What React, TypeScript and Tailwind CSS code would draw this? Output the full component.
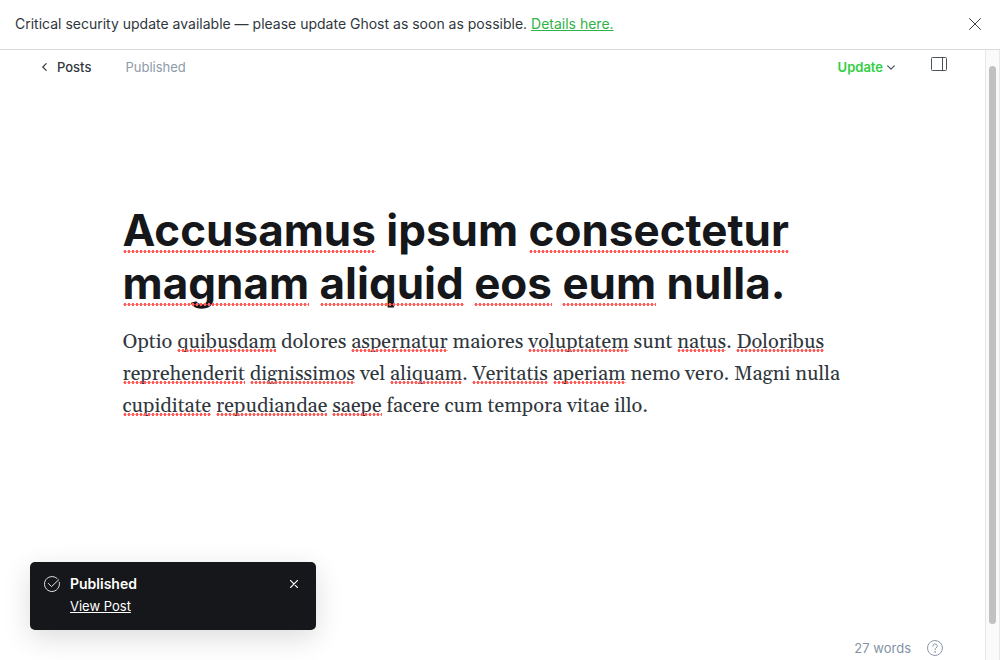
import React from "react";

function Misspelled({ children }: { children: string }) {
  return (
    <span className="relative whitespace-nowrap after:absolute after:inset-x-0 after:bottom-(--dots) after:h-[3px] after:bg-[radial-gradient(circle,#ff5b58_1.3px,transparent_1.8px)] after:bg-[length:4px_3px] after:content-['']">
      {children}
    </span>
  );
}

/* Words between underscores carry the spell checker's dotted underline. */
function Marked({ text }: { text: string }) {
  return (
    <>
      {text
        .split("_")
        .map((part, i) => (i % 2 ? <Misspelled key={i}>{part}</Misspelled> : <React.Fragment key={i}>{part}</React.Fragment>))}
    </>
  );
}

const title = "_Accusamus_ ipsum _consectetur_ _magnam_ _aliquid_ _eos_ _eum_ nulla.";
const body =
  "Optio _quibusdam_ dolores _aspernatur_ maiores _voluptatem_ sunt _natus_. _Doloribus_ _reprehenderit_ _dignissimos_ vel _aliquam_. _Veritatis_ _aperiam_ nemo vero. Magni nulla _cupiditate_ _repudiandae_ _saepe_ facere cum tempora vitae illo.";

function Alert() {
  return (
    <aside className="flex items-center justify-between border-b border-[#dadbdc] px-[15px] pb-[13px] pt-3 text-sm leading-6 text-[#30373d]">
      <p>
        Critical security update available — please update Ghost as soon as possible.{" "}
        <a href="#details" className="text-[#30b24a] underline">
          Details here.
        </a>
      </p>
      <button type="button" aria-label="Dismiss" className="p-1">
        <svg className="size-3" viewBox="0 0 12 12" fill="none" stroke="#394047" strokeLinecap="round">
          <path d="M.5.5l11 11M11.5.5l-11 11" />
        </svg>
      </button>
    </aside>
  );
}

function Toolbar() {
  return (
    <header className="flex items-center pl-10 pr-[38px] pt-[7px] text-[13px] leading-5">
      <a href="#posts" className="flex items-center gap-2 font-medium text-[#30373d]">
        <svg className="h-2 w-[9px]" viewBox="0 0 9 8" fill="none" stroke="#394047" strokeWidth="1.2" strokeLinecap="round" strokeLinejoin="round">
          <path d="M6.2.6L2.8 4l3.4 3.4" />
        </svg>
        Posts
      </a>
      <span className="ml-[34px] text-[#8d9aab]">Published</span>
      <button type="button" className="ml-auto flex items-center gap-1 font-semibold text-[#30cf43]">
        Update
        <svg className="h-[5px] w-2" viewBox="0 0 8 5" fill="none" stroke="#50575e" strokeWidth="1.3" strokeLinecap="round" strokeLinejoin="round">
          <path d="M.7.9L4 4.1 7.3.9" />
        </svg>
      </button>
      <button type="button" aria-label="Settings" className="ml-9 self-start">
        <svg className="h-[14px] w-4" viewBox="0 0 16 14" fill="none" stroke="#4b535c">
          <rect x=".5" y=".5" width="15" height="13" rx="1" />
          <path d="M11.5.5v13" />
        </svg>
      </button>
    </header>
  );
}

function Toast() {
  return (
    <div role="status" className="absolute bottom-[30px] left-[30px] flex w-[286px] items-start rounded-[5px] bg-[#15171a] px-[14px] py-3 text-white shadow-[0_8px_28px_rgba(0,0,0,0.14)]">
      <svg className="mt-0.5 size-4" viewBox="0 0 16 16" fill="none" stroke="#e3e5e7" strokeLinecap="round" strokeLinejoin="round">
        <path d="M15.3 6.3A7.5 7.5 0 1 1 13 2.4" />
        <path d="M4.3 7.4l3.2 3.2L14.8 3.7" />
      </svg>
      <div className="ml-[10px] flex-1">
        <p className="text-sm font-semibold leading-5">Published</p>
        <a href="#post" className="block text-[13px] leading-6 underline">
          View Post
        </a>
      </div>
      <button type="button" aria-label="Close" className="p-1.5 pr-1">
        <svg className="size-2" viewBox="0 0 8 8" fill="none" stroke="#fff" strokeWidth="1.2" strokeLinecap="round">
          <path d="M.4.4l7.2 7.2M7.6.4L.4 7.6" />
        </svg>
      </button>
    </div>
  );
}

export default function App() {
  return (
    <div className="relative flex min-h-screen flex-col bg-white font-[Inter,sans-serif]">
      <Alert />
      <div className="flex flex-1">
        <div className="flex min-w-0 flex-1 flex-col">
          <Toolbar />
          <main className="mx-auto w-full max-w-[740px] flex-1 pt-[127px]">
            <h1 contentEditable suppressContentEditableWarning spellCheck={false} className="text-[44px] font-bold leading-[53px] text-[#15171a] outline-none [--dots:4px]">
              <Marked text={title} />
            </h1>
            <p contentEditable suppressContentEditableWarning spellCheck={false} className="mt-4 font-[Georgia,Gelasio,'Liberation_Serif',serif] text-[20px] leading-8 text-[#30373d] outline-none [--dots:3px]">
              <Marked text={body} />
            </p>
          </main>
          <footer className="flex items-center justify-end gap-4 pb-1 pr-[42px] text-[13px] leading-4 text-[#8493a5]">
            <span>27 words</span>
            <a href="#help" aria-label="Help">
              <svg className="size-4" viewBox="0 0 16 16" fill="none" stroke="#8d9aab" strokeLinecap="round" strokeLinejoin="round">
                <circle cx="8" cy="8" r="7.5" />
                <path d="M5.8 6.2A2.2 2.2 0 1 1 8.9 8.1Q8 8.5 8 9.7" />
                <circle cx="8" cy="11.9" r=".3" />
              </svg>
            </a>
          </footer>
        </div>
        <div aria-hidden="true" className="flex w-[15px] border-x border-[#e8e8e8] bg-[#fafafa] px-[3px] pb-9 pt-4">
          <div className="w-2 rounded-full bg-[#c1c1c1]" />
        </div>
      </div>
      <Toast />
    </div>
  );
}
